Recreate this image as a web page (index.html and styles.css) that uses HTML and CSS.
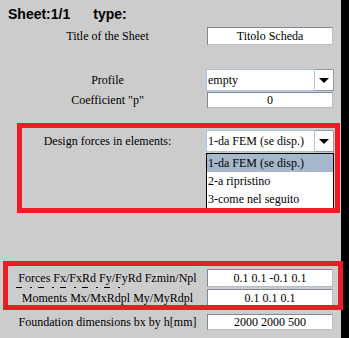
FILE: index.html
```html
<!DOCTYPE html>
<html lang="en">
<head>
    <meta charset="UTF-8">
    <title>Sheet</title>
    <link rel="stylesheet" href="styles.css">
</head>
<body>
<div class="page">

    <div class="header"><span>Sheet:1/1</span><span class="type">type:</span></div>

    <div class="row row-title">
        <div class="label">Title of the Sheet</div>
        <div class="field box">Titolo Scheda</div>
    </div>

    <div class="row row-profile">
        <div class="label">Profile</div>
        <div class="select">
            <div class="select-text">empty</div>
            <div class="select-btn"><span class="arrow"></span></div>
        </div>
    </div>

    <div class="row row-coef">
        <div class="label">Coefficient "p"</div>
        <div class="field box small">0</div>
    </div>

    <div class="row row-design">
        <div class="label">Design forces in elements:</div>
        <div class="select open">
            <div class="select-text">1-da FEM (se disp.)</div>
            <div class="select-btn"><span class="arrow"></span></div>
            <!-- open dropdown list -->
            <ul class="options">
                <li class="selected">1-da FEM (se disp.)</li>
                <li>2-a ripristino</li>
                <li>3-come nel seguito</li>
            </ul>
        </div>
    </div>

    <div class="row row-forces">
        <div class="label">Forces Fx/FxRd Fy/FyRd Fzmin/Npl</div>
        <div class="field box">0.1 0.1 -0.1 0.1</div>
    </div>

    <div class="row row-moments">
        <div class="label">
            <span class="ghost"></span>
            Moments Mx/MxRdpl My/MyRdpl
        </div>
        <div class="field box">0.1 0.1 0.1</div>
    </div>

    <div class="row row-found">
        <div class="label">Foundation dimensions bx by h[mm]</div>
        <div class="field box small">2000 2000 500</div>
    </div>

    <!-- red highlight frames -->
    <div class="mark mark-design"></div>
    <div class="mark mark-forces"></div>
</div>
</body>
</html>
```

FILE: styles.css
```css
body {
    margin: 0;
    background-color: #000;
    font-family: "Liberation Serif", Tinos, "Times New Roman", Times, serif;
    font-size: 12px;
    color: #000;
}

.page {
    position: relative;
    width: 341px;
    height: 338px;
    background-color: #cccccc;
    font-family: "Liberation Serif", Tinos, "Times New Roman", Times, serif;
}

.header {
    padding: 6px 0 0 8px;
    height: 16px;
    line-height: 16px;
    font-family: "Liberation Sans", Arial, sans-serif;
    font-weight: bold;
    font-size: 14px;
}

.type {
    margin-left: 23px;
}

.row {
    display: flex;
    align-items: center;
}

.label {
    position: relative;
    width: 199px;
    margin-left: 8px;
    text-align: center;
    white-space: nowrap;
}

.box {
    box-sizing: border-box;
    width: 126px;
    height: 18px;
    line-height: 16px;
    background-color: #fff;
    border: 1px solid;
    border-color: #7d8b98 #b4bec8 #b4bec8 #7d8b98;
    text-align: center;
}

.box.small {
    height: 16px;
    line-height: 14px;
}

.row-title { margin-top: 5px; }
.row-profile { margin-top: 24px; }
.row-coef { margin-top: 1px; }
.row-design { margin-top: 22px; }
.row-forces { margin-top: 117px; }
.row-moments { margin-top: 2px; }
.row-found { margin-top: 7px; }

.row-profile .label,
.row-design .label {
    margin-right: -1px;
}

.select {
    position: relative;
    display: flex;
    width: 128px;
    height: 22px;
}

.select-text {
    box-sizing: border-box;
    width: 109px;
    height: 22px;
    line-height: 20px;
    padding-left: 1px;
    background-color: #fff;
    border: 1px solid #a9c4e2;
    white-space: nowrap;
    overflow: hidden;
}

.select-btn {
    box-sizing: border-box;
    width: 19px;
    height: 22px;
    background-color: #fff;
    border: 1px solid #8e9caa;
    border-left: none;
    display: flex;
    align-items: center;
    justify-content: center;
}

.arrow {
    width: 0;
    height: 0;
    border-left: 5px solid transparent;
    border-right: 5px solid transparent;
    border-top: 5px solid #000;
}

.options {
    position: absolute;
    top: 23px;
    left: 0;
    box-sizing: border-box;
    width: 128px;
    margin: 0;
    padding: 0;
    list-style: none;
    background-color: #fff;
    border: 1px solid #000;
}

.options li {
    height: 18px;
    line-height: 18px;
    padding-left: 1px;
    white-space: nowrap;
}

.options .selected {
    background-color: #a6b8cc;
}

/* clipped leftovers of a hidden label line */
.ghost {
    position: absolute;
    top: -4px;
    left: 8px;
    width: 110px;
    height: 1px;
    background: repeating-linear-gradient(90deg, #000 0 6px, transparent 6px 14px, #000 14px 16px, transparent 16px 22px);
}

.mark {
    position: absolute;
    box-sizing: border-box;
    border: 5px solid #ed1c24;
}

.mark-design {
    left: 17px;
    top: 123px;
    width: 323px;
    height: 90px;
}

.mark-forces {
    left: 3px;
    top: 261px;
    width: 340px;
    height: 49px;
}
```
